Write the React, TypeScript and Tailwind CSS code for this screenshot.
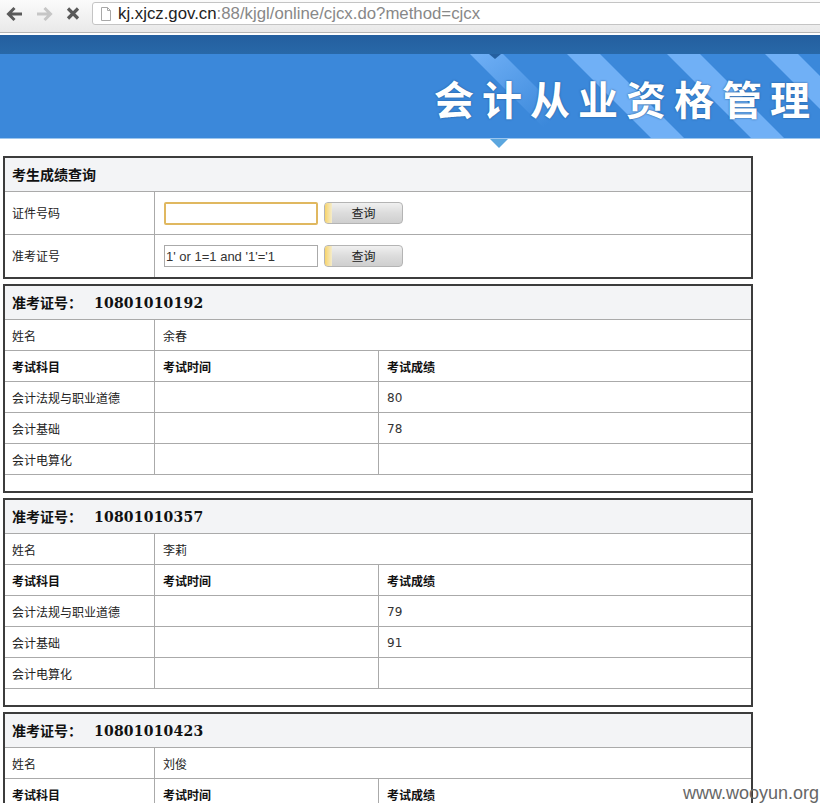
import React from "react";

const cjk = "font-['Liberation_Sans','Noto_Sans_CJK_SC',sans-serif]";

function Btn() {
  return (
    <button className="relative w-[79px] h-[22px] pt-[2px] rounded-[4px] border border-[#b4b4b4] overflow-hidden bg-gradient-to-b from-[#f0f0f0] via-[#dcdcdc] to-[#cfcfcf] text-[12px] text-[#222]">
      <span className="absolute left-0 top-0 bottom-0 w-[7px] bg-gradient-to-r from-[#f8d468] to-[#f4eccb]" />
      查询
    </button>
  );
}

function Cell({ w, bold, children, latin, first, tight }: { w?: string; bold?: boolean; children?: React.ReactNode; latin?: boolean; first?: boolean; tight?: boolean }) {
  return (
    <div
      className={`${w ?? "flex-1"} ${first ? "pl-[7px]" : "pl-2"} ${tight || latin ? "pt-[2px]" : "pt-[4px]"} flex items-center border-r border-[#aaaaaa] last:border-r-0 ${bold ? "font-bold text-[#111]" : "text-[#222]"} ${latin ? "font-['DejaVu_Sans',sans-serif] text-[#333]" : ""}`}
    >
      {children}
    </div>
  );
}

function Row({ name, c2, c3, bold }: { name: string; c2?: string; c3?: string; bold?: boolean }) {
  return (
    <div className="flex h-[31px] border-t border-[#aaaaaa] text-[12px]">
      <Cell w="w-[150px]" bold={bold} first>{name}</Cell>
      <Cell w="w-[224px]" bold={bold}>{c2}</Cell>
      <Cell bold={bold} latin={!bold}>{c3}</Cell>
    </div>
  );
}

function Result({ id, name, s1, s2 }: { id: string; name: string; s1: string; s2: string }) {
  return (
    <section className="mx-[3px] w-[750px] border-2 border-[#3c3c3c] mb-[5px]">
      <div className="h-[33px] bg-[#f3f4f6] pl-[7px] pt-[2px] flex items-center text-[14px] font-bold text-[#111]">
        准考证号：
        <span className="ml-[12px] font-['DejaVu_Serif',serif] text-[14px] tracking-[0.2px]">{id}</span>
      </div>
      <div className="flex h-[31px] border-t border-[#aaaaaa] text-[12px] text-[#222]">
        <Cell w="w-[150px]" first>姓名</Cell>
        <Cell>{name}</Cell>
      </div>
      <Row name="考试科目" c2="考试时间" c3="考试成绩" bold />
      <Row name="会计法规与职业道德" c3={s1} />
      <Row name="会计基础" c3={s2} />
      <Row name="会计电算化" />
      <div className="h-[17px] border-t border-[#aaaaaa]" />
    </section>
  );
}

export default function App() {
  return (
    <div className={`relative w-[820px] h-[803px] overflow-hidden bg-white ${cjk}`}>
      {/* Browser toolbar */}
      <div className="h-[33px] bg-gradient-to-b from-[#fbfbfb] to-[#e9e9e9] border-b border-[#b5b5b5] flex items-start pt-[2px]">
        <div className="w-[92px] h-[24px] relative shrink-0">
          <svg width="92" height="24" viewBox="0 0 92 24" fill="none">
            <path d="M22 12H9M14.5 6L8.5 12L14.5 18" stroke="#5a5a5a" strokeWidth="3" />
            <path d="M37 12H50M44.5 6L50.5 12L44.5 18" stroke="#c6c6c6" strokeWidth="3" />
            <path d="M68 6.5L78 16.5M78 6.5L68 16.5" stroke="#5a5a5a" strokeWidth="3.2" />
          </svg>
        </div>
        <div className="flex-1 h-[23px] -mr-1 bg-white border border-[#c4c4c4] rounded-[3px] flex items-center pl-[7px] font-['Liberation_Sans',sans-serif] text-[16.8px]">
          <svg width="12" height="14" viewBox="0 0 12 14" fill="none" className="mr-[6px] shrink-0">
            <path d="M1.5 0.5H7.5L10.5 3.5V13.5H1.5Z" fill="#fff" stroke="#a8a8a8" />
            <path d="M7.5 0.5V3.5H10.5" stroke="#a8a8a8" />
          </svg>
          <span className="text-[#222]">kj.xjcz.gov.cn</span>
          <span className="text-[#888]">:88/kjgl/online/cjcx.do?method=cjcx</span>
        </div>
      </div>
      <div className="h-[2px] bg-white" />

      {/* Banner */}
      <div className="h-[19px] bg-gradient-to-b from-[#245f9f] to-[#2868a8]" />
      <div className="relative h-[85px] bg-[#3b88da] border-b border-[#9cc6ee]">
        <svg width="820" height="84" viewBox="0 0 820 84" className="absolute inset-0">
          <defs>
            <linearGradient id="fade" x1="0" y1="0" x2="1" y2="1">
              <stop offset="0" stopColor="#70b0f6" />
              <stop offset="0.75" stopColor="#3b88da" />
            </linearGradient>
          </defs>
          <polygon points="470,0 503,0 587,84 554,84" fill="url(#fade)" />
          <polygon points="567,0 600,0 684,84 651,84" fill="#70b0f6" />
          <polygon points="667,0 700,0 784,84 751,84" fill="#70b0f6" />
          <polygon points="765,0 798,0 882,84 849,84" fill="#70b0f6" />
          <polygon points="489,0 501,0 495,5" fill="#245f9f" />
        </svg>
        <div className="absolute left-[434px] top-[21px] flex gap-[8px] text-[40px] leading-[46px] font-bold text-white [text-shadow:0_0_2px_#1d4f86] font-['Noto_Sans_CJK_SC',sans-serif]">
          <span>会</span><span>计</span><span>从</span><span>业</span><span>资</span><span>格</span><span>管</span><span>理</span>
        </div>
      </div>
      <div className="relative h-[17px]">
        <svg width="18" height="9" viewBox="0 0 18 9" className="absolute left-[490px] top-0">
          <polygon points="0,0 18,0 9,9" fill="#5ba6de" />
        </svg>
      </div>

      {/* Query panel */}
      <section className="mx-[3px] w-[750px] border-2 border-[#3c3c3c] mb-[5px]">
        <div className="h-[33px] bg-[#f3f4f6] pl-[7px] pt-[2px] flex items-center text-[14px] font-bold text-[#111]">考生成绩查询</div>
        <div className="flex h-[43px] border-t border-[#aaaaaa] text-[12px] text-[#222]">
          <Cell w="w-[150px]" first tight>证件号码</Cell>
          <div className="flex-1 flex items-center pl-[9px] gap-[6px]">
            <input className="w-[154px] h-[23px] border-2 border-[#e0b860] rounded-[2px] bg-white outline-none" />
            <Btn />
          </div>
        </div>
        <div className="flex h-[43px] border-t border-[#aaaaaa] text-[12px] text-[#222]">
          <Cell w="w-[150px]" first tight>准考证号</Cell>
          <div className="flex-1 flex items-center pl-[9px] gap-[6px]">
            <input
              readOnly
              value="1' or 1=1 and '1'='1"
              className="w-[154px] h-[22px] border border-[#aaaaaa] bg-white px-[1px] text-[13px] text-[#333] font-['Liberation_Sans',sans-serif] outline-none"
            />
            <Btn />
          </div>
        </div>
      </section>

      <Result id="10801010192" name="余春" s1="80" s2="78" />
      <Result id="10801010357" name="李莉" s1="79" s2="91" />
      <Result id="10801010423" name="刘俊" s1="" s2="" />

      <div className="absolute right-[1px] bottom-0 font-['Liberation_Sans',sans-serif] text-[18px] leading-[20px] text-[#666]">www.wooyun.org</div>
    </div>
  );
}
